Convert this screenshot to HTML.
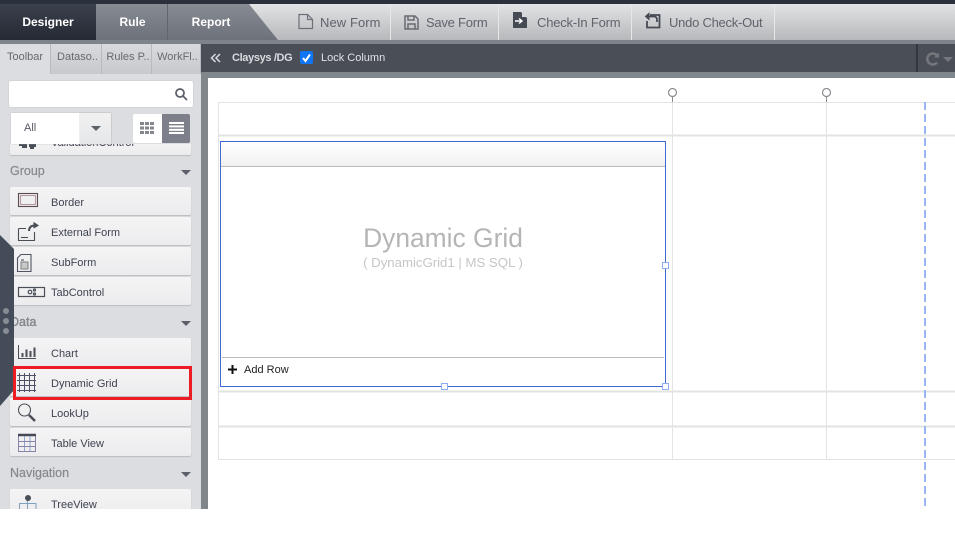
<!DOCTYPE html>
<html><head><meta charset="utf-8">
<style>
*{box-sizing:border-box}
html,body{margin:0;padding:0;width:955px;height:544px;overflow:hidden;background:#fff;font-family:"Liberation Sans",sans-serif}
.a{position:absolute}
#app{position:absolute;left:0;top:0;width:955px;height:509px;overflow:hidden}
.t{position:absolute;white-space:nowrap}
.item{position:absolute;left:10px;width:181px;height:28px;background:linear-gradient(#f4f4f5,#ececee);border-radius:2px;box-shadow:0 1px 1px #b9bbbf}
.item span{position:absolute;left:41px;top:9px;font-size:11px;color:#3f4350;white-space:nowrap;line-height:14px}
.item svg{position:absolute;left:0;top:0}
.gh{position:absolute;left:10px;font-size:12.5px;color:#85888d;line-height:14px;white-space:nowrap;-webkit-text-stroke:.2px #85888d}
.tri{position:absolute;left:181px;width:0;height:0;border-left:5px solid transparent;border-right:5px solid transparent;border-top:5px solid #5c6068}
.tb{position:absolute;top:4px;height:36px;border-right:1px solid #e6e7e9}
.tbl{position:absolute;top:15px;font-size:13px;color:#5f636b;white-space:nowrap;line-height:16px}
.stab{position:absolute;top:44px;height:30px;background:linear-gradient(#d9dadd,#c8c9cd);border-right:1px solid #b8babd;font-size:11px;color:#666a70;line-height:27px;text-align:center;padding-left:3px}
.sq{position:absolute;width:6px;height:6px;background:#fff;border:1px solid #8fadf2}
</style></head>
<body>
<div id="app">
<!-- top -->
<div class="a" style="left:0;top:0;width:955px;height:4px;background:#2a303c"></div>
<div class="a" style="left:0;top:4px;width:955px;height:36px;background:linear-gradient(#e2e3e5,#b7b8bb)"></div>
<div class="a" style="left:0;top:40px;width:955px;height:4px;background:#7f848a"></div>
<svg class="a" style="left:0;top:4px" width="290" height="36">
<defs><linearGradient id="g1" x1="0" y1="0" x2="0" y2="1"><stop offset="0" stop-color="#3b414d"/><stop offset="1" stop-color="#252a34"/></linearGradient>
<linearGradient id="g2" x1="0" y1="0" x2="0" y2="1"><stop offset="0" stop-color="#878b94"/><stop offset="1" stop-color="#6d7179"/></linearGradient></defs>
<polygon points="96,0 249,0 278,36 96,36" fill="url(#g2)"/>
<rect x="0" y="0" width="96" height="36" fill="url(#g1)"/>
<rect x="167" y="0" width="1" height="36" fill="#61656d"/>
</svg>
<div class="t" style="left:0;width:96px;text-align:center;top:15px;font-size:12px;font-weight:bold;color:#fff;line-height:15px">Designer</div>
<div class="t" style="left:97px;width:71px;text-align:center;top:15px;font-size:12px;font-weight:bold;color:#fff;line-height:15px">Rule</div>
<div class="t" style="left:168px;width:86px;text-align:center;top:15px;font-size:12px;font-weight:bold;color:#fff;line-height:15px">Report</div>

<div class="tb" style="left:278px;width:113px"></div>
<div class="tb" style="left:391px;width:108px"></div>
<div class="tb" style="left:499px;width:133px"></div>
<div class="tb" style="left:632px;width:143px"></div>

<svg class="a" style="left:297px;top:12px" width="20" height="20" fill="none" stroke="#6d7078" stroke-width="1.2"><path d="M2 2.5H10.500L15.500 7.500V16.500H2Z"/><path d="M10.500 2.500V7.500H15.500"/></svg>
<div class="tbl" style="left:320px;letter-spacing:.08px">New Form</div>
<svg class="a" style="left:403px;top:14px" width="18" height="18" fill="none" stroke="#686b72" stroke-width="1.5"><path d="M2 2H12L15 5V15H2Z"/><path d="M5 2V6H11V2M5 15V10H12V15"/></svg>
<div class="tbl" style="left:426px;letter-spacing:-.24px">Save Form</div>
<svg class="a" style="left:512px;top:11px" width="16" height="18"><path d="M1 1H9L15 7V17H1Z" fill="#454a54"/><path d="M10 1L15 6H10Z" fill="#d6d7d9"/><path d="M3 10H9M7 7.500L10 10L7 12.500" stroke="#fff" stroke-width="1.400" fill="none"/></svg>
<div class="tbl" style="left:537px;letter-spacing:-.2px">Check-In Form</div>
<svg class="a" style="left:644px;top:12px" width="19" height="17" fill="none" stroke="#454a54" stroke-width="1.800"><path d="M6 3H15.500V15.500H3V9"/><path d="M5.500 0.800L1.500 4.500L5.500 8" fill="#454a54" stroke-width="1"/><path d="M3 4.500H10Q13 4.500 13 8V10"/></svg>
<div class="tbl" style="left:669px;letter-spacing:-.25px">Undo Check-Out</div>

<!-- sidebar -->
<div class="a" style="left:0;top:44px;width:201px;height:465px;background:#dcdde0"></div>
<div class="a" style="left:201px;top:44px;width:7px;height:465px;background:#7f868c"></div>
<div class="a" style="left:0;top:44px;width:51px;height:30px;background:#dcdde0;border-right:1px solid #b8babd;font-size:11px;color:#63676d;line-height:27px;text-align:center">Toolbar</div>
<div class="stab" style="left:51px;width:51px">Dataso..</div>
<div class="stab" style="left:102px;width:50px">Rules P..</div>
<div class="stab" style="left:152px;width:49px">WorkFl..</div>

<div class="a" style="left:9px;top:81px;width:184px;height:26px;background:#fff;border-radius:2px;box-shadow:0 0 1px #aaa"></div>
<svg class="a" style="left:174px;top:87px" width="14" height="14" fill="none" stroke="#5d6169" stroke-width="1.800"><circle cx="6" cy="6" r="4"/><path d="M9 9L13 13"/></svg>

<!-- partially hidden item -->
<div class="a" style="left:10px;top:144px;width:181px;height:11px;background:linear-gradient(#f2f2f3,#ececee);border-radius:0 0 2px 2px;box-shadow:0 1px 1px #b9bbbf;overflow:hidden">
<div class="t" style="left:41px;top:-8px;font-size:11px;color:#3f4350;line-height:14px">ValidationControl</div>
<svg class="a" style="left:9px;top:0" width="28" height="6" fill="#4a4e57"><rect x="0" y="0" width="8" height="2"/><rect x="3" y="2" width="5" height="2"/><rect x="10" y="0" width="7" height="3"/><rect x="11" y="3" width="4" height="2"/></svg>
</div>
<div class="a" style="left:11px;top:113px;width:100px;height:31px;background:#fff;box-shadow:0 0 1px #aaa"></div>
<div class="a" style="left:80px;top:113px;width:31px;height:31px;background:linear-gradient(#f1f1f2,#e6e7e8);box-shadow:0 0 1px #aaa"></div>
<div class="a" style="left:91px;top:126px;border-left:5px solid transparent;border-right:5px solid transparent;border-top:5px solid #5c6068"></div>
<div class="t" style="left:24px;top:121px;font-size:11px;color:#555962;line-height:14px">All</div>
<div class="a" style="left:133px;top:114px;width:29px;height:29px;background:#fff;border-radius:2px 0 0 2px"></div>
<div class="a" style="left:162px;top:114px;width:28px;height:29px;background:#7d7f8a;border-radius:0 2px 2px 0"></div>
<svg class="a" style="left:140px;top:122px" width="15" height="12" fill="#85878f"><rect width="4" height="3"/><rect x="5" width="4" height="3"/><rect x="10" width="4" height="3"/><rect y="4.500" width="4" height="3"/><rect x="5" y="4.500" width="4" height="3"/><rect x="10" y="4.500" width="4" height="3"/><rect y="9" width="4" height="3"/><rect x="5" y="9" width="4" height="3"/><rect x="10" y="9" width="4" height="3"/></svg>
<svg class="a" style="left:169px;top:122px" width="15" height="12" fill="#fff"><rect width="15" height="2"/><rect y="3.400" width="15" height="2"/><rect y="6.800" width="15" height="2"/><rect y="10" width="15" height="2"/></svg>

<div class="gh" style="top:164px">Group</div><div class="tri" style="top:170px"></div>

<div class="item" style="top:187px"><span>Border</span><svg width="36" height="28" fill="none" stroke-width="1.100"><rect x="8.500" y="6.500" width="19" height="13" stroke="#5a4a50"/><rect x="10.500" y="8.500" width="15" height="9" stroke="#b39aa0"/></svg></div>
<div class="item" style="top:217px"><span>External Form</span><svg width="36" height="28" fill="none" stroke="#4a4e57" stroke-width="1.100"><path d="M8.500 11.500H16M24.500 15V23.500H8.500V11.500"/><path d="M11 20.500H18"/><path d="M19 14Q19 8.500 25 8.500" stroke-width="2"/><path d="M23.500 5.500L28 8.500L23.500 11" fill="#4a4e57"/></svg></div>
<div class="item" style="top:247px"><span>SubForm</span><svg width="36" height="28" fill="none" stroke="#4f5560" stroke-width="1.100"><path d="M11 7.500H21V24.500H7.500V11Z"/><rect x="11" y="15" width="7" height="7" fill="#c6c8cc" stroke="#888"/><path d="M11 13H14"/></svg></div>
<div class="item" style="top:277px"><span>TabControl</span><svg width="36" height="28" fill="none" stroke="#4a4e57" stroke-width="1.200"><rect x="8.500" y="10.500" width="26" height="9"/><circle cx="20" cy="15" r="1.800"/><circle cx="24.500" cy="13" r="1"/><circle cx="24.500" cy="17" r="1"/></svg></div>

<div class="gh" style="top:315px">Data</div><div class="tri" style="top:321px"></div>

<div class="item" style="top:338px"><span>Chart</span><svg width="36" height="28" fill="none" stroke="#4a4e57"><path d="M8.500 7V20.500H26" stroke-width="1"/><path d="M12.500 19V15M16.500 19V11.500M20.500 19V13M24.500 19V9.500" stroke-width="2"/></svg></div>
<div class="item" style="top:368px"><span>Dynamic Grid</span><svg width="36" height="28" fill="none" stroke="#4f5266" stroke-width="1"><path d="M9.500 5V24M14.500 5V24M19.500 5V24M24.500 5V24M7 7.500H26M7 12.500H26M7 17.500H26M7 22.500H26"/></svg></div>
<div class="item" style="top:398px"><span>LookUp</span><svg width="36" height="28" fill="none" stroke="#4a4e57"><circle cx="14.500" cy="12" r="6" stroke-width="1.100"/><path d="M19 17L25 23" stroke-width="2.500"/></svg></div>
<div class="item" style="top:428px"><span>Table View</span><svg width="36" height="28" fill="none" stroke="#8a82a8" stroke-width="1"><rect x="8.500" y="6.500" width="17" height="17"/><path d="M8 7H26" stroke="#444955" stroke-width="2.500"/><path d="M14.500 8V23M20 8V23" stroke="#8fa5c9"/><path d="M9 13.500H25M9 18.500H25"/></svg></div>

<div class="gh" style="top:466px">Navigation</div><div class="tri" style="top:472px"></div>
<div class="item" style="top:489px;height:28px"><span>TreeView</span><svg width="36" height="28" fill="none" stroke="#7fa0c0"><circle cx="18" cy="9" r="3" fill="#4a4e57" stroke="none"/><path d="M9.500 24V14.500H26V24M17.500 12V24"/></svg></div>

<!-- hex -->
<svg class="a" style="left:0;top:230px" width="16" height="180"><polygon points="0,5 14,19 14,160 0,176" fill="#454c59"/><circle cx="6" cy="81" r="3" fill="#878c95"/><circle cx="6" cy="91" r="3" fill="#878c95"/><circle cx="6" cy="101" r="3" fill="#878c95"/></svg>
<div class="gh" style="top:315px;clip-path:inset(0 0 0 4px)">Data</div>

<!-- red box -->
<div class="a" style="left:13px;top:366px;width:179px;height:34px;border:3px solid #ed1c24"></div>

<!-- dark bar -->
<div class="a" style="left:201px;top:44px;width:754px;height:28px;background:#4a4e57"></div>
<div class="a" style="left:201px;top:72px;width:754px;height:6px;background:#7f868c"></div>
<svg class="a" style="left:210px;top:52px" width="12" height="12" fill="none" stroke="#d8dade" stroke-width="1.500"><path d="M5.500 2L1.500 6L5.500 10M10 2L6 6L10 10"/></svg>
<div class="t" style="left:232px;top:51px;font-size:11px;font-weight:bold;color:#d9dbde;line-height:14px;letter-spacing:-.35px">Claysys /DG</div>
<div class="a" style="left:300px;top:51px;width:13px;height:13px;background:#0f75f5;border-radius:2px"></div>
<svg class="a" style="left:300px;top:51px" width="13" height="13" fill="none" stroke="#fff" stroke-width="2"><path d="M3 7L5.500 10L10 3.500"/></svg>
<div class="t" style="left:321px;top:51px;font-size:11px;color:#e0e2e4;line-height:14px">Lock Column</div>
<div class="a" style="left:916px;top:44px;width:2px;height:28px;background:#333740"></div>
<svg class="a" style="left:924px;top:51px" width="31" height="16" fill="none"><path d="M13 4.500A5.500 5.500 0 1 0 13 11.500" stroke="#74777b" stroke-width="2.500"/><path d="M10 6.500H15V1.500Z" fill="#74777b"/><path d="M19 6H29L24 11Z" fill="#74777b"/></svg>

<!-- canvas -->
<div class="a" style="left:208px;top:78px;width:747px;height:431px;background:#fff"></div>
<svg class="a" style="left:208px;top:78px" width="747" height="431" fill="none">
<path d="M10.500 24.500H747M10.500 24.500V381.500H747" stroke="#e2e3e3"/>
<path d="M464.500 24V381M618.500 24V381" stroke="#e2e3e3"/>
<path d="M11 57.500H747M11 313.500H747M11 348.500H747" stroke="#e2e3e3" stroke-width="2"/>
<circle cx="464.500" cy="14.500" r="4" stroke="#8a8d91" stroke-width="1.200"/><path d="M464.500 18.500V24" stroke="#8a8d91"/>
<circle cx="618.500" cy="14.500" r="4" stroke="#8a8d91" stroke-width="1.200"/><path d="M618.500 18.500V24" stroke="#8a8d91"/>
<path d="M717 24V431" stroke="#9ab7f5" stroke-width="2" stroke-dasharray="8 4"/>
</svg>

<!-- grid comp -->
<div class="a" style="left:220px;top:141px;width:446px;height:246px;background:#fff;border:1px solid #4169d0"></div>
<div class="a" style="left:221px;top:142px;width:444px;height:25px;background:linear-gradient(#fff,#fafafa 40%,#f0f0f0);border-bottom:1px solid #bbb"></div>
<div class="a" style="left:222px;top:357px;width:442px;height:1px;background:#bbb"></div>
<div class="t" style="left:221px;width:444px;text-align:center;top:223px;font-size:26.4px;color:#b5b5b5;line-height:30px">Dynamic Grid</div>
<div class="t" style="left:221px;width:444px;text-align:center;top:254px;font-size:13.2px;color:#c6c6c6;line-height:17px">( DynamicGrid1 | MS SQL )</div>
<svg class="a" style="left:227px;top:364px" width="11" height="11"><path d="M5.500 1V10M1 5.500H10" stroke="#111" stroke-width="2"/></svg>
<div class="t" style="left:244px;top:363px;font-size:11px;color:#222;line-height:14px">Add Row</div>
<div class="sq" style="left:662px;top:262px;width:7px;height:7px"></div>
<div class="sq" style="left:441px;top:383px;width:7px;height:7px"></div>
<div class="sq" style="left:662px;top:383px;width:7px;height:7px"></div>
</div>
</body></html>
